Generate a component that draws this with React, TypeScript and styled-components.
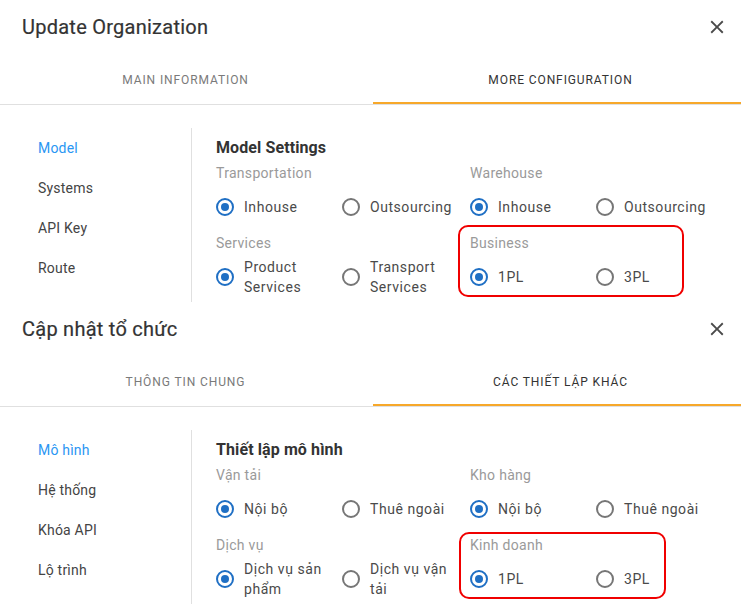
import React from "react";
import styled, { createGlobalStyle } from "styled-components";

const Global = createGlobalStyle`
  html, body { margin: 0; padding: 0; background: #fff; }
  body { font-family: Roboto, "Noto Sans", Arial, sans-serif; -webkit-font-smoothing: antialiased; }
  * { box-sizing: border-box; }
`;

type Option = { label: string; checked?: boolean };
type Group = { title: string; options: Option[] };
type Highlight = { left: number; top: number; width: number; height: number };
type PanelData = {
  title: string;
  tabs: string[];
  activeTab: number;
  menu: string[];
  activeMenu: number;
  heading: string;
  groups: Group[];
  highlight: Highlight;
};

const Page = styled.div`
  width: 741px;
  display: flex;
  flex-direction: column;
  overflow: hidden;
`;

const Panel = styled.section`
  position: relative;
  height: 302px;
  overflow: hidden;
  background: #fff;
`;

const Header = styled.header`
  height: 55px;
  display: flex;
  align-items: center;
  justify-content: space-between;
  padding: 0 12px 2px 22px;
`;

const Title = styled.h2`
  margin: 0;
  font-size: 20px;
  font-weight: 400;
  color: #333;
  letter-spacing: 0.25px;
  -webkit-text-stroke: 0.2px #333;
`;

const CloseButton = styled.button`
  width: 24px;
  height: 24px;
  padding: 0;
  border: 0;
  background: none;
  display: flex;
  align-items: center;
  justify-content: center;
  color: #4a4a4a;
`;

const TabBar = styled.nav`
  display: grid;
  grid-template-columns: 375px 375px;
  margin-left: -2px;
  width: 750px;
  height: 50px;
  border-bottom: 1px solid #e0e0e0;
`;

const Tab = styled.div<{ $active?: boolean }>`
  position: relative;
  display: flex;
  align-items: center;
  justify-content: center;
  font-size: 12px;
  font-weight: 400;
  letter-spacing: 0.9px;
  text-transform: uppercase;
  color: ${(p) => (p.$active ? "#333" : "#7a7a7a")};
  &::after {
    content: "";
    position: absolute;
    left: 0;
    right: 0;
    bottom: 0;
    height: 2px;
    background: ${(p) => (p.$active ? "#f7a82a" : "transparent")};
  }
`;

const Body = styled.div`
  display: flex;
  padding-top: 23px;
`;

const Sidebar = styled.ul`
  list-style: none;
  margin: 0;
  padding: 0 0 0 38px;
  width: 192px;
  flex: none;
  border-right: 1px solid #e0e0e0;
  min-height: 260px;
`;

const MenuItem = styled.li<{ $active?: boolean }>`
  height: 40px;
  display: flex;
  align-items: center;
  font-size: 14px;
  letter-spacing: 0.2px;
  color: ${(p) => (p.$active ? "#2a96f3" : "#444")};
`;

const Content = styled.div`
  padding: 9px 0 0 24px;
  flex: 1;
`;

const Heading = styled.h3`
  margin: 0;
  font-size: 16px;
  line-height: 22px;
  font-weight: 700;
  color: #333;
  letter-spacing: 0.1px;
`;

const GroupGrid = styled.div`
  margin-top: 4px;
  display: grid;
  grid-template-columns: 254px 254px;
  row-gap: 6px;
`;

const GroupBox = styled.div``;

const GroupLabel = styled.div`
  font-size: 14px;
  line-height: 20px;
  color: #9a9a9a;
  letter-spacing: 0.3px;
`;

const OptionRow = styled.div`
  margin-top: 4px;
  display: flex;
  min-height: 40px;
`;

const OptionItem = styled.label`
  width: 126px;
  display: flex;
  align-items: center;
  gap: 10px;
`;

const RadioCircle = styled.span<{ $checked?: boolean }>`
  flex: none;
  width: 18px;
  height: 18px;
  border-radius: 50%;
  border: 2px solid ${(p) => (p.$checked ? "#1f6fc4" : "#767676")};
  display: flex;
  align-items: center;
  justify-content: center;
  &::after {
    content: "";
    width: 8px;
    height: 8px;
    border-radius: 50%;
    background: ${(p) => (p.$checked ? "#1f6fc4" : "transparent")};
  }
`;

const OptionText = styled.span`
  font-size: 14px;
  line-height: 20px;
  color: #4a4a4a;
  letter-spacing: 0.55px;
  max-width: 88px;
`;

const HighlightFrame = styled.div`
  position: absolute;
  border: 2.5px solid #f00000;
  border-radius: 10px;
  pointer-events: none;
`;

const CloseIcon = () => (
  <svg width="22" height="22" viewBox="0 0 24 24" fill="currentColor">
    <path d="M19 6.41L17.59 5 12 10.59 6.41 5 5 6.41 10.59 12 5 17.59 6.41 19 12 13.41 17.59 19 19 17.59 13.41 12z" />
  </svg>
);

const OrgPanel = ({ data }: { data: PanelData }) => (
  <Panel>
    <Header>
      <Title>{data.title}</Title>
      <CloseButton aria-label="close">
        <CloseIcon />
      </CloseButton>
    </Header>
    <TabBar>
      {data.tabs.map((t, i) => (
        <Tab key={t} $active={i === data.activeTab}>
          {t}
        </Tab>
      ))}
    </TabBar>
    <Body>
      <Sidebar>
        {data.menu.map((m, i) => (
          <MenuItem key={m} $active={i === data.activeMenu}>
            {m}
          </MenuItem>
        ))}
      </Sidebar>
      <Content>
        <Heading>{data.heading}</Heading>
        <GroupGrid>
          {data.groups.map((g) => (
            <GroupBox key={g.title}>
              <GroupLabel>{g.title}</GroupLabel>
              <OptionRow>
                {g.options.map((o) => (
                  <OptionItem key={o.label}>
                    <RadioCircle $checked={o.checked} />
                    <OptionText>{o.label}</OptionText>
                  </OptionItem>
                ))}
              </OptionRow>
            </GroupBox>
          ))}
        </GroupGrid>
      </Content>
    </Body>
    <HighlightFrame
      style={{
        left: data.highlight.left,
        top: data.highlight.top,
        width: data.highlight.width,
        height: data.highlight.height,
      }}
    />
  </Panel>
);

const english: PanelData = {
  title: "Update Organization",
  tabs: ["Main Information", "More Configuration"],
  activeTab: 1,
  menu: ["Model", "Systems", "API Key", "Route"],
  activeMenu: 0,
  heading: "Model Settings",
  groups: [
    { title: "Transportation", options: [{ label: "Inhouse", checked: true }, { label: "Outsourcing" }] },
    { title: "Warehouse", options: [{ label: "Inhouse", checked: true }, { label: "Outsourcing" }] },
    { title: "Services", options: [{ label: "Product Services", checked: true }, { label: "Transport Services" }] },
    { title: "Business", options: [{ label: "1PL", checked: true }, { label: "3PL" }] },
  ],
  highlight: { left: 458, top: 225, width: 226, height: 72 },
};

const vietnamese: PanelData = {
  title: "Cập nhật tổ chức",
  tabs: ["Thông tin chung", "Các thiết lập khác"],
  activeTab: 1,
  menu: ["Mô hình", "Hệ thống", "Khóa API", "Lộ trình"],
  activeMenu: 0,
  heading: "Thiết lập mô hình",
  groups: [
    { title: "Vận tải", options: [{ label: "Nội bộ", checked: true }, { label: "Thuê ngoài" }] },
    { title: "Kho hàng", options: [{ label: "Nội bộ", checked: true }, { label: "Thuê ngoài" }] },
    { title: "Dịch vụ", options: [{ label: "Dịch vụ sản phẩm", checked: true }, { label: "Dịch vụ vận tải" }] },
    { title: "Kinh doanh", options: [{ label: "1PL", checked: true }, { label: "3PL" }] },
  ],
  highlight: { left: 459, top: 230, width: 207, height: 67 },
};

export default function App() {
  return (
    <>
      <Global />
      <Page>
        <OrgPanel data={english} />
        <OrgPanel data={vietnamese} />
      </Page>
    </>
  );
}
